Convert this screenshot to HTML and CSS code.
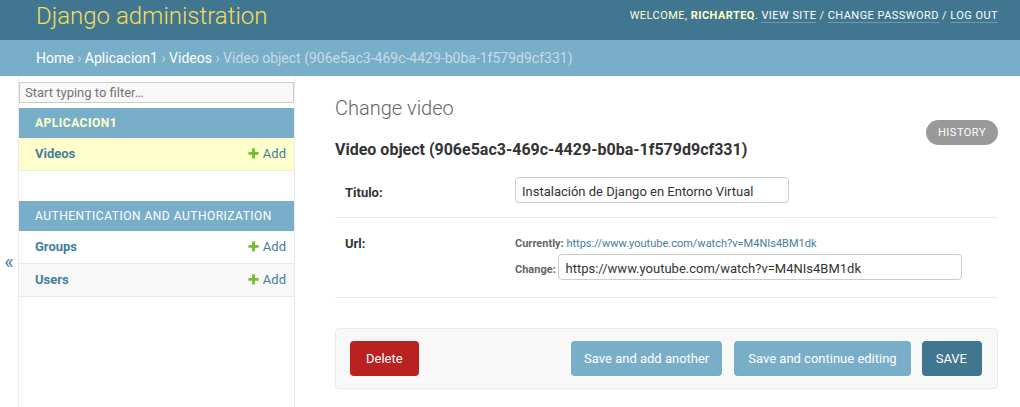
FILE: index.html
```html
<!DOCTYPE html>
<html lang="en">
<head>
<meta charset="utf-8">
<title>Change video | Django site admin</title>
<link rel="stylesheet" href="styles.css">
</head>
<body>
<header class="header">
  <h1 class="site-name"><a href="#">Django administration</a></h1>
  <div class="user-tools">Welcome, <strong>richarteq</strong>. <a href="#">View site</a> / <a href="#">Change password</a> / <a href="#">Log out</a></div>
</header>
<nav class="breadcrumbs"><a href="#">Home</a> › <a href="#">Aplicacion1</a> › <a href="#">Videos</a> › Video object (906e5ac3-469c-4429-b0ba-1f579d9cf331)</nav>
<div class="main">
  <div class="nav-toggle"><span>«</span></div>
  <aside class="nav-sidebar">
    <input class="nav-filter" type="search" placeholder="Start typing to filter…">
    <div class="module current-app">
      <div class="module-caption"><a href="#">Aplicacion1</a></div>
      <div class="model-row current-model">
        <a class="model-link" href="#">Videos</a>
        <a class="addlink" href="#"><svg class="plus" width="13" height="13" viewBox="0 0 1792 1792"><path fill="#70bf2b" d="M1600 796v192q0 40-28 68t-68 28h-416v416q0 40-28 68t-68 28h-192q-40 0-68-28t-28-68v-416h-416q-40 0-68-28t-28-68v-192q0-40 28-68t68-28h416v-416q0-40 28-68t68-28h192q40 0 68 28t28 68v416h416q40 0 68 28t28 68z"/></svg>Add</a>
      </div>
    </div>
    <div class="module">
      <div class="module-caption"><a href="#">Authentication and Authorization</a></div>
      <div class="model-row">
        <a class="model-link" href="#">Groups</a>
        <a class="addlink" href="#"><svg class="plus" width="13" height="13" viewBox="0 0 1792 1792"><path fill="#70bf2b" d="M1600 796v192q0 40-28 68t-68 28h-416v416q0 40-28 68t-68 28h-192q-40 0-68-28t-28-68v-416h-416q-40 0-68-28t-28-68v-192q0-40 28-68t68-28h416v-416q0-40 28-68t68-28h192q40 0 68 28t28 68v416h416q40 0 68 28t28 68z"/></svg>Add</a>
      </div>
      <div class="model-row alt">
        <a class="model-link" href="#">Users</a>
        <a class="addlink" href="#"><svg class="plus" width="13" height="13" viewBox="0 0 1792 1792"><path fill="#70bf2b" d="M1600 796v192q0 40-28 68t-68 28h-416v416q0 40-28 68t-68 28h-192q-40 0-68-28t-28-68v-416h-416q-40 0-68-28t-28-68v-192q0-40 28-68t68-28h416v-416q0-40 28-68t68-28h192q40 0 68 28t28 68v416h416q40 0 68 28t28 68z"/></svg>Add</a>
      </div>
    </div>
  </aside>
  <main class="content">
    <h1 class="page-title">Change video</h1>
    <div class="subtitle-row">
      <h2 class="subtitle">Video object (906e5ac3-469c-4429-b0ba-1f579d9cf331)</h2>
      <div class="object-tools"><a class="history" href="#">History</a></div>
    </div>
    <form class="change-form">
      <fieldset class="fieldset">
        <div class="form-row">
          <label class="field-label" for="id_titulo">Titulo:</label>
          <input class="text-input vTextField" id="id_titulo" type="text" value="Instalación de Django en Entorno Virtual">
        </div>
        <div class="form-row">
          <label class="field-label" for="id_url">Url:</label>
          <p class="url">Currently: <a href="#">https://www.youtube.com/watch?v=M4NIs4BM1dk</a><br>Change: <input class="text-input vURLField" id="id_url" type="url" value="https://www.youtube.com/watch?v=M4NIs4BM1dk"></p>
        </div>
      </fieldset>
      <div class="submit-row">
        <a class="btn deletelink" href="#">Delete</a>
        <button class="btn btn-secondary btn-add push" type="button">Save and add another</button>
        <button class="btn btn-secondary btn-continue" type="button">Save and continue editing</button>
        <button class="btn btn-default" type="button">Save</button>
      </div>
    </form>
  </main>
</div>
</body>
</html>
```
FILE: styles.css
```css
html, body {
  margin: 0;
  padding: 0;
}
body {
  font-family: Roboto, "Liberation Sans", sans-serif;
  font-size: 14px;
  color: #333;
  background: #fff;
}
a {
  text-decoration: none;
  color: #447e9b;
}

/* Header */
.header {
  display: flex;
  justify-content: space-between;
  align-items: flex-start;
  height: 40px;
  box-sizing: border-box;
  padding: 0 22px 0 36px;
  background: #417690;
  color: #ffc;
}
.site-name {
  margin: 0;
  padding-top: 2px;
  font-size: 24px;
  font-weight: 300;
  line-height: 28px;
}
.site-name a {
  color: #f5dd5d;
}
.user-tools {
  padding-top: 6px;
  font-size: 11px;
  line-height: 20px;
  letter-spacing: 0.45px;
  text-transform: uppercase;
  color: #ffc;
}
.user-tools strong {
  font-weight: 700;
  color: #ffc;
}
.user-tools a {
  color: #fff;
  border-bottom: 1px solid rgba(255, 255, 255, 0.25);
}

/* Breadcrumbs */
.breadcrumbs {
  padding: 10px 36px;
  font-size: 14px;
  line-height: 16px;
  background: #79aec8;
  color: #c4dce8;
}
.breadcrumbs a {
  color: #fff;
}

/* Main layout */
.main {
  display: flex;
  min-height: calc(100vh - 76px);
}
.nav-toggle {
  flex: 0 0 18px;
  width: 18px;
  border-right: 1px solid #eaeaea;
  padding-top: 176px;
  box-sizing: content-box;
  text-align: center;
  font-size: 20px;
  line-height: 20px;
  color: #447e9b;
}
.nav-sidebar {
  flex: 0 0 275px;
  width: 275px;
  border-right: 1px solid #eaeaea;
}
.nav-filter {
  display: block;
  width: 100%;
  height: 21px;
  box-sizing: border-box;
  margin: 6px 0 5px;
  padding: 2px 5px;
  border: 1px solid #ccc;
  border-radius: 0;
  background: #f8f8f8;
  font-family: Roboto, "Liberation Sans", sans-serif;
  font-size: 13px;
  color: #333;
  outline: none;
}
.nav-filter::placeholder {
  color: #757575;
}
.module {
  margin-bottom: 30px;
}
.module-caption {
  padding: 8px 8px 8px 16px;
  font-size: 12px;
  line-height: 14px;
  letter-spacing: 0.5px;
  text-transform: uppercase;
  background: #79aec8;
}
.module-caption a {
  color: #fff;
}
.current-app .module-caption a {
  color: #ffc;
  font-weight: 700;
}
.model-row {
  display: flex;
  justify-content: space-between;
  padding: 8px 8px 8px 16px;
  border-bottom: 1px solid #eaeaea;
  font-size: 13px;
  line-height: 16px;
}
.model-row.current-model {
  background: #ffc;
}
.model-row.alt {
  background: #f8f8f8;
}
.model-link {
  font-weight: 700;
}
.addlink {
  white-space: nowrap;
}
.plus {
  vertical-align: -2px;
  margin-right: 3px;
}

/* Content */
.content {
  flex: 1;
  min-width: 0;
  padding: 20px 22px 20px 40px;
}
.page-title {
  margin: 0 0 20px;
  font-size: 20px;
  font-weight: 300;
  line-height: 24px;
  color: #666;
}
.subtitle-row {
  display: flex;
  justify-content: space-between;
  align-items: flex-start;
}
.subtitle {
  margin: 0 0 8px;
  font-size: 16px;
  line-height: 19px;
  font-weight: 700;
  color: #333;
}
.object-tools {
  margin-top: -20px;
}
.history {
  display: block;
  padding: 3px 12px;
  background: #999;
  color: #fff;
  font-size: 11px;
  line-height: 19px;
  letter-spacing: 0.5px;
  text-transform: uppercase;
  border-radius: 15px;
}

/* Form */
.change-form {
  margin: 0;
}
.fieldset {
  margin: 0 0 30px;
  padding: 0;
  border: none;
  min-width: 0;
}
.form-row {
  display: flex;
  align-items: flex-start;
  padding: 10px;
  border-bottom: 1px solid #eaeaea;
  font-size: 13px;
}
.field-label {
  flex: 0 0 160px;
  width: 160px;
  padding: 4px 10px 0 0;
  line-height: 1;
  font-weight: 700;
  color: #333;
}
.field-label::after {
  content: '';
  display: inline-block;
  vertical-align: middle;
  height: 26px;
}
.text-input {
  height: 26px;
  box-sizing: border-box;
  padding: 6px 6px 4px;
  border: 1px solid #ccc;
  border-radius: 4px;
  font-family: Roboto, "Liberation Sans", sans-serif;
  font-size: 13px;
  color: #333;
  background: #fff;
  margin: 0;
  outline: none;
}
.vTextField {
  width: 274px;
}
.vURLField {
  width: 404px;
}
.url {
  margin: 0;
  padding: 6px 0 7px;
  font-size: 11px;
  line-height: 20px;
  font-weight: 700;
  color: #666;
}
.url a {
  font-weight: 400;
}

/* Submit row */
.submit-row {
  display: flex;
  align-items: center;
  padding: 12px 15px 12px 14px;
  background: #f8f8f8;
  border: 1px solid #eaeaea;
  border-radius: 4px;
}
.btn {
  display: block;
  height: 35px;
  box-sizing: border-box;
  padding: 10px 15px;
  border: none;
  border-radius: 4px;
  font-family: Roboto, "Liberation Sans", sans-serif;
  font-size: 13px;
  line-height: 15px;
  color: #fff;
  cursor: pointer;
}
.deletelink {
  background: #ba2121;
  padding-left: 16px;
  padding-right: 16px;
}
.btn-secondary {
  background: #79aec8;
}
.btn-add {
  padding-left: 13px;
  padding-right: 13px;
}
.btn-continue {
  margin-left: 12px;
  padding-left: 14px;
  padding-right: 14px;
}
.btn-default {
  margin-left: 11px;
  padding-left: 14px;
  padding-right: 15px;
  background: #417690;
  text-transform: uppercase;
}
.push {
  margin-left: auto;
}
```
